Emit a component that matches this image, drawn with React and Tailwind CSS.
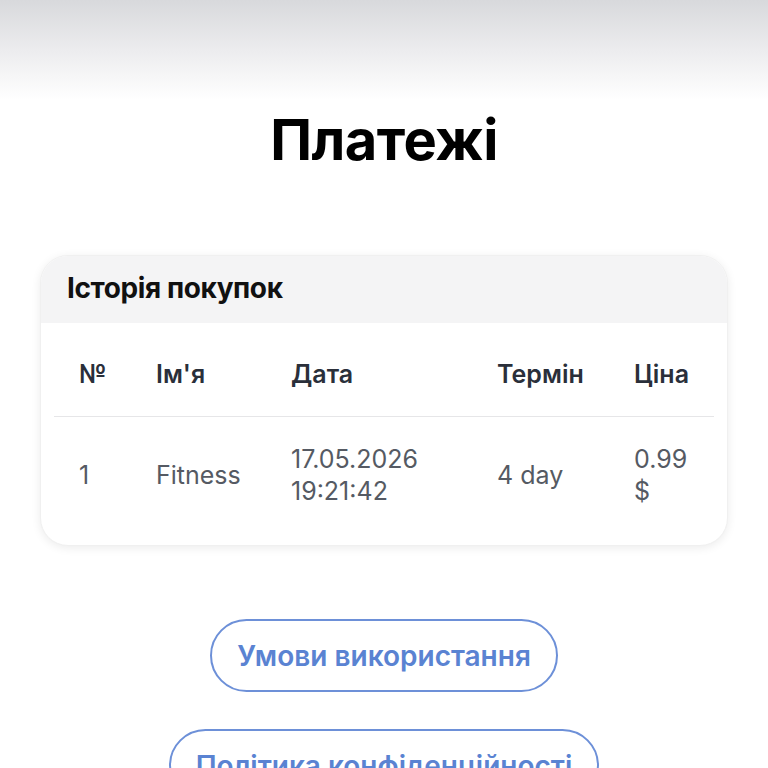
export default function App() {
    const font = { fontFamily: "Inter, 'Noto Sans', sans-serif" };
    return (
        <div className="min-h-[768px] w-full bg-white overflow-hidden" style={font}>
            <div className="h-[100px] w-full bg-gradient-to-b from-[#d8d9dc] via-[#ececee] to-white" />
            <h1 className="mt-[6px] text-center text-[56px] font-bold leading-[68px] text-black tracking-[-0.5px]">Платежі</h1>

            <section className="mx-[40px] mt-[81px] overflow-hidden rounded-[28px] bg-white shadow-[0_2px_10px_rgba(0,0,0,0.08)] border border-[#f0f0f0]">
                <div className="h-[67px] bg-[#f4f4f5] flex items-center px-[26px] pb-[4px]">
                    <h2 className="text-[28px] font-bold text-[#111] tracking-[-0.4px]">Історія покупок</h2>
                </div>
                <div className="px-[13px] pb-[38px]">
                    <div className="grid grid-cols-[77px_135px_206px_137px_1fr] h-[94px] items-center pt-[10px] border-b border-[#e6e6e8] text-[25px] font-semibold text-[#2a2f3a]">
                        <div className="pl-[25px]">№</div>
                        <div className="pl-[25px]">Ім'я</div>
                        <div className="pl-[25px]">Дата</div>
                        <div className="pl-[25px]">Термін</div>
                        <div className="pl-[25px]">Ціна</div>
                    </div>
                    <div className="grid grid-cols-[77px_135px_206px_137px_1fr] items-center pt-[26px] text-[25px] leading-[32px] text-[#555a63]">
                        <div className="pl-[25px]">1</div>
                        <div className="pl-[25px]">Fitness</div>
                        <div className="pl-[25px]">17.05.2026<br />19:21:42</div>
                        <div className="pl-[25px]">4 day</div>
                        <div className="pl-[25px] pr-[10px]">0.99 $</div>
                    </div>
                </div>
            </section>

            <div className="mt-[73px] flex flex-col items-center gap-[37px]">
                <button className="h-[73px] px-[25px] rounded-full border-2 border-[#6d90d8] text-[28px] font-semibold text-[#5a83d2]">Умови використання</button>
                <button className="h-[73px] px-[25px] rounded-full border-2 border-[#6d90d8] text-[28px] font-semibold text-[#5a83d2]">Політика конфіденційності</button>
            </div>
        </div>
    );
}
